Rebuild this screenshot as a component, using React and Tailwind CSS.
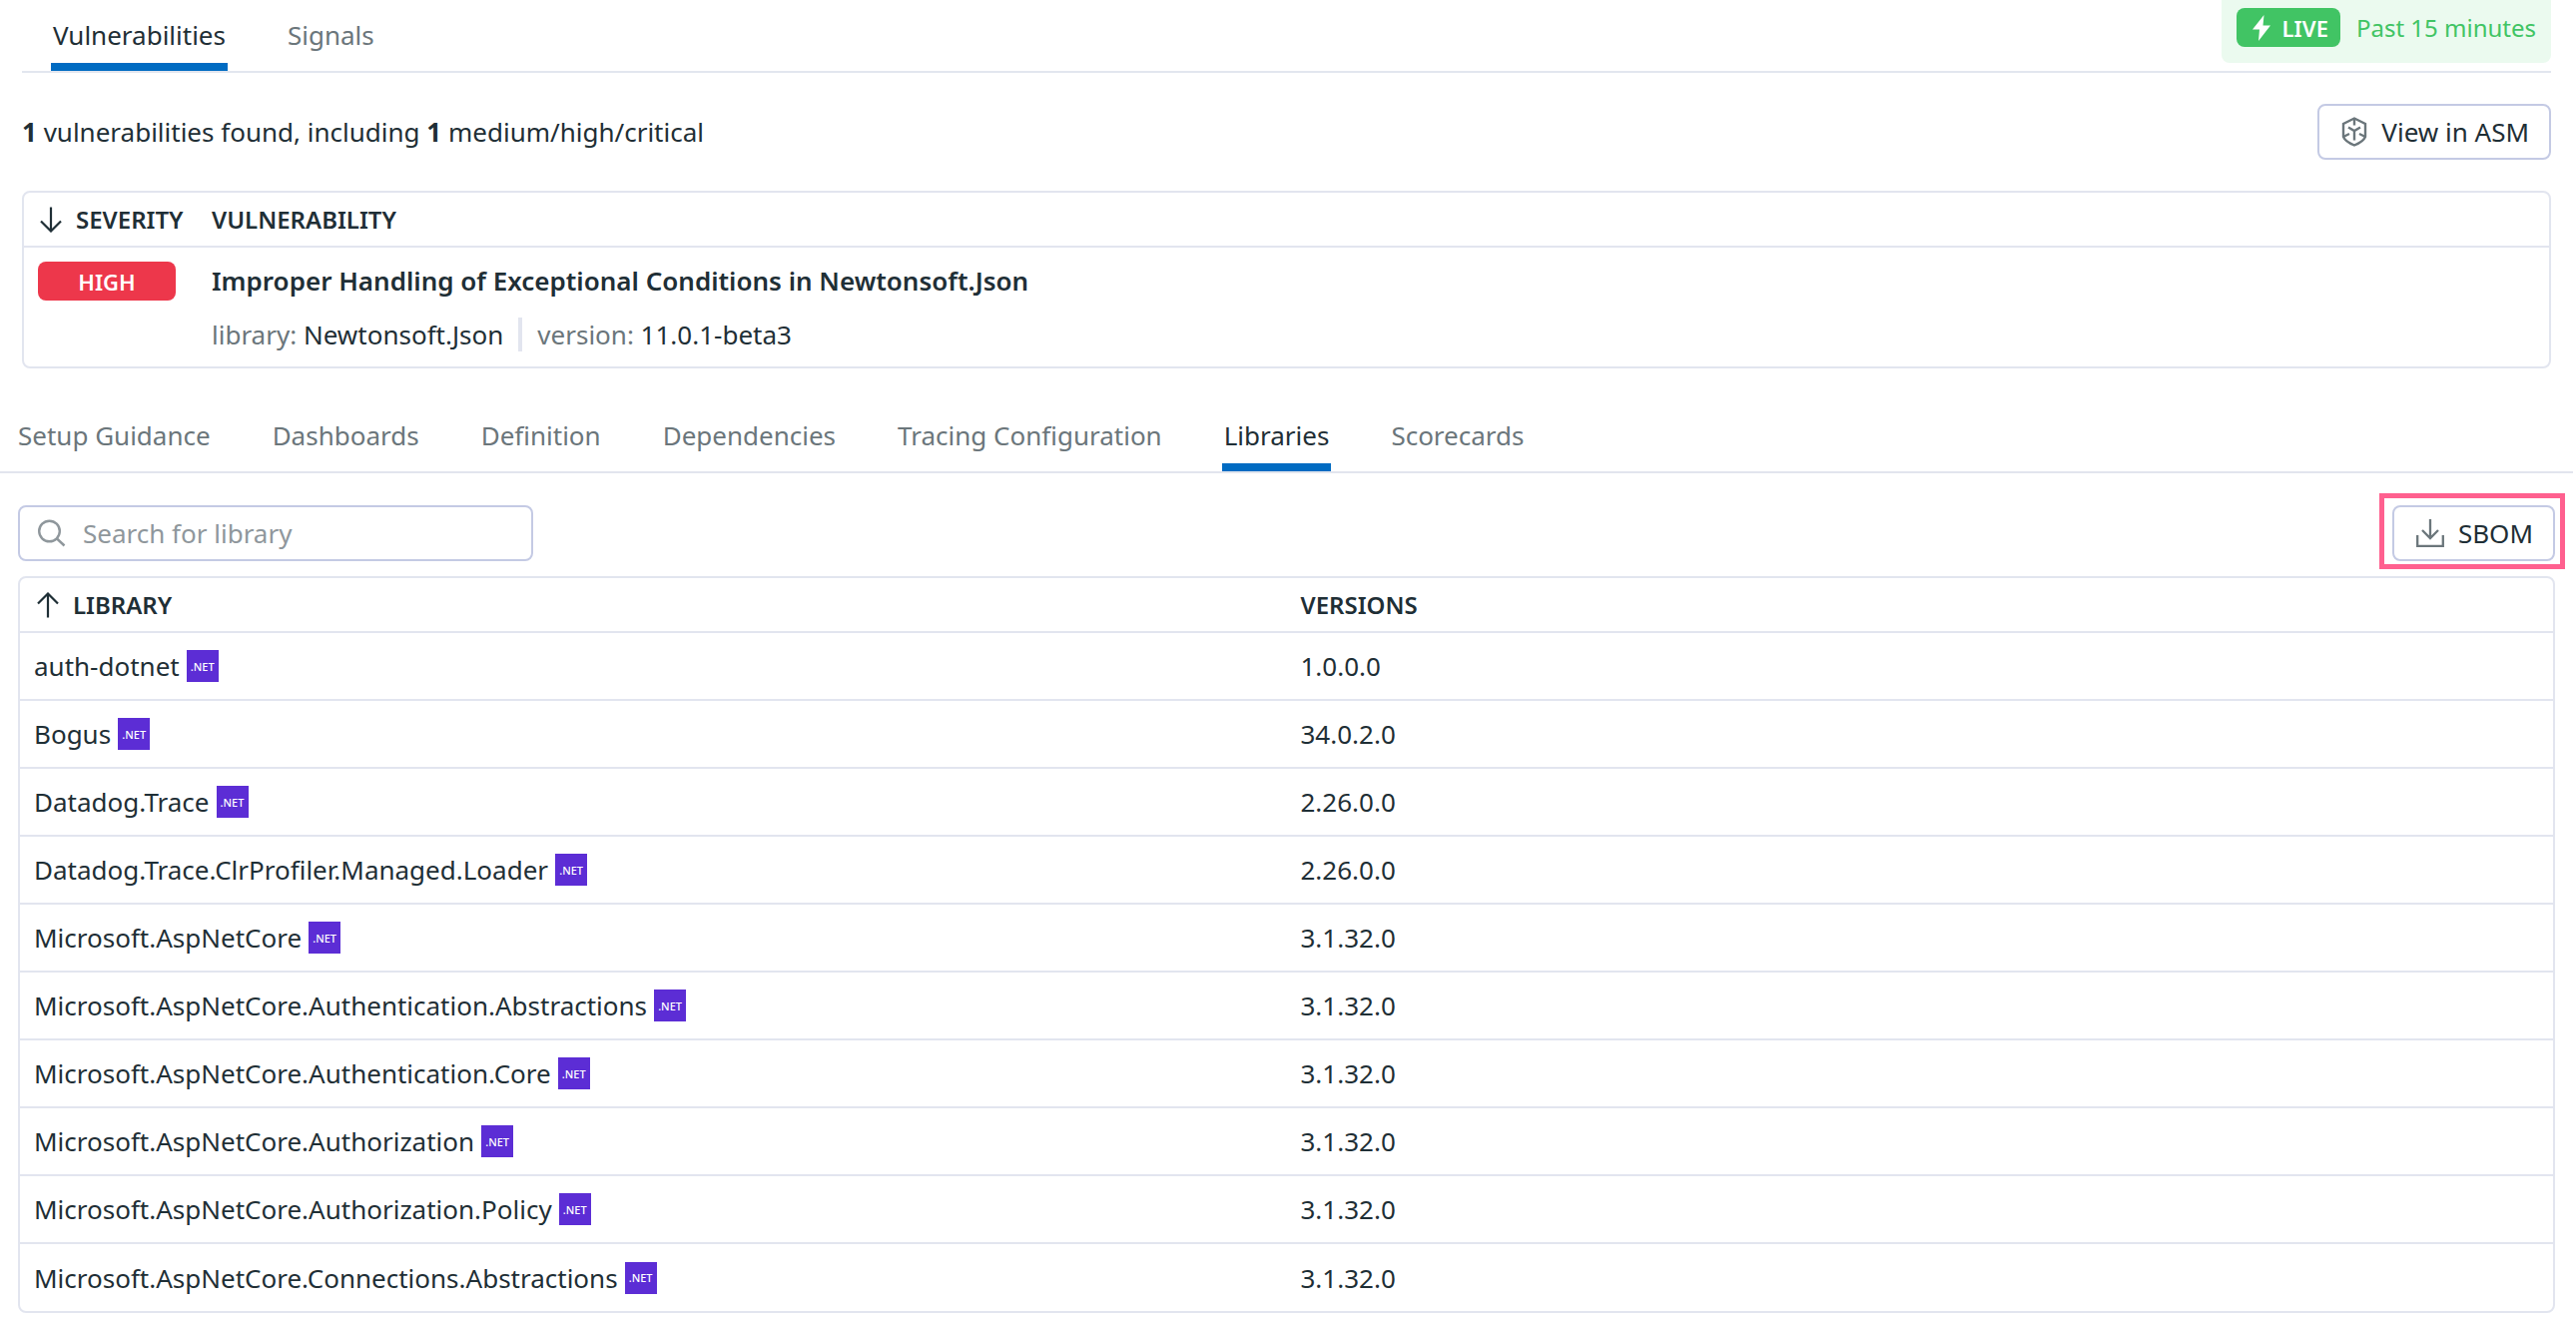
import React from "react";

const detailTabs = [
  "Setup Guidance",
  "Dashboards",
  "Definition",
  "Dependencies",
  "Tracing Configuration",
  "Libraries",
  "Scorecards",
];

const libraries = [
  ["auth-dotnet", "1.0.0.0"],
  ["Bogus", "34.0.2.0"],
  ["Datadog.Trace", "2.26.0.0"],
  ["Datadog.Trace.ClrProfiler.Managed.Loader", "2.26.0.0"],
  ["Microsoft.AspNetCore", "3.1.32.0"],
  ["Microsoft.AspNetCore.Authentication.Abstractions", "3.1.32.0"],
  ["Microsoft.AspNetCore.Authentication.Core", "3.1.32.0"],
  ["Microsoft.AspNetCore.Authorization", "3.1.32.0"],
  ["Microsoft.AspNetCore.Authorization.Policy", "3.1.32.0"],
  ["Microsoft.AspNetCore.Connections.Abstractions", "3.1.32.0"],
];

function SortArrow({ up }) {
  return (
    <svg aria-hidden="true" className="h-[26px] w-[22px] shrink-0" viewBox="0 0 22 26" fill="none" stroke="currentColor" strokeWidth="2.2">
      {up ? <path d="M11 25.5V1.5M1 11.5l10-10 10 10" /> : <path d="M11 0.5v24M1 14.5l10 10 10-10" />}
    </svg>
  );
}

function AsmIcon() {
  return (
    <svg aria-hidden="true" className="h-[30px] w-[26px]" viewBox="0 0 26 30" fill="none" stroke="#6b767b" strokeWidth="2.4">
      <path d="M13 1.5 24 7v13c-1.500 3.500-6 6.500-11 8.500C8 26.500 3.500 23.500 2 20V7Z" />
      <path d="M13 2v6.500M7 10.500l6 3.500 6-3.500M13 14v9.500M2 20l6-3M24 20l-6-3" />
    </svg>
  );
}

function Tab({ label, active }) {
  return (
    <button
      type="button"
      role="tab"
      aria-selected={active}
      className={
        active
          ? "border-b-8 border-[#006bc2] px-0.5 pb-[10px] text-[#1f2f36]"
          : "border-b-8 border-transparent px-0.5 pb-[10px] text-[#6b767b]"
      }
    >
      {label}
    </button>
  );
}

export default function App() {
  return (
    <main className="bg-white font-['Noto_Sans',sans-serif] text-[26px] leading-9 text-[#1f2f36]">
      <section className="pl-[22px] pr-[25px]">
        <div className="flex items-start justify-between border-b-2 border-[#e2e6ef]">
          <div role="tablist" className="flex gap-[58px] pl-[29px] pt-[17px]">
            <Tab label="Vulnerabilities" active />
            <Tab label="Signals" active={false} />
          </div>
          <div className="flex h-[63px] items-start gap-4 rounded-b-lg bg-[#ebfaef] px-[15px] pt-2 text-[#41c464]">
            <span className="flex h-[39px] items-center gap-3 rounded-lg bg-[#41c464] pl-4 pr-3 text-[22px] font-semibold text-white">
              <svg aria-hidden="true" className="h-[26px] w-[18px]" viewBox="0 0 18 26" fill="#fff">
                <path d="M11.500 0 0 14.500h7L6 26 18 10.500h-7.500Z" />
              </svg>
              LIVE
            </span>
            <span className="text-[24px] leading-10">Past 15 minutes</span>
          </div>
        </div>

        <div className="flex items-center justify-between pt-[31px]">
          <p>
            <b className="font-bold">1</b> vulnerabilities found, including <b className="font-bold">1</b> medium/high/critical
          </p>
          <button type="button" className="flex h-14 items-center gap-[14px] rounded-lg border-2 border-[#c4cae4] pl-[22px] pr-5">
            <AsmIcon />
            View in ASM
          </button>
        </div>

        <div className="mt-[31px] rounded-lg border-2 border-[#e2e5ef]">
          <table className="w-full text-left">
            <thead>
              <tr className="border-b-2 border-[#e2e5ef] text-[24px]">
                <th className="h-[54px] w-[174px] py-0 pl-4 font-semibold">
                  <span className="flex items-center gap-[14px]">
                    <SortArrow up={false} />
                    SEVERITY
                  </span>
                </th>
                <th className="py-0 pl-[14px] font-semibold">VULNERABILITY</th>
              </tr>
            </thead>
            <tbody>
              <tr className="align-top">
                <td className="pl-[14px] pt-[14px]">
                  <span className="flex h-[39px] w-[138px] items-center justify-center rounded-lg bg-[#ed374b] text-[22px] font-semibold text-white">HIGH</span>
                </td>
                <td className="pb-[14px] pl-[14px] pt-[15px]">
                  <p className="font-semibold">Improper Handling of Exceptional Conditions in Newtonsoft.Json</p>
                  <p className="flex items-center pt-[18px]">
                    <span><span className="text-[#6b767b]">library:</span> Newtonsoft.Json</span>
                    <span className="mx-[15px] h-[34px] w-1 bg-[#e2e5ef]" />
                    <span><span className="text-[#6b767b]">version:</span> 11.0.1-beta3</span>
                  </p>
                </td>
              </tr>
            </tbody>
          </table>
        </div>
      </section>

      <div role="tablist" className="mr-[3px] mt-[49px] flex gap-[58px] border-b-2 border-[#e2e5ee] pl-4">
        {detailTabs.map((t) => (
          <Tab key={t} label={t} active={t === "Libraries"} />
        ))}
      </div>

      <section className="pl-[18px] pr-[21px] pt-8">
        <div className="flex items-center justify-between">
          <label className="flex h-14 w-[516px] items-center gap-[17px] rounded-lg border-2 border-[#c4cae4] px-[18px]">
            <svg aria-hidden="true" className="h-7 w-7 shrink-0" viewBox="0 0 28 28" fill="none" stroke="#8f979c" strokeWidth="2.4">
              <circle cx="11.500" cy="12" r="10.300" />
              <path d="m18.500 19 8 7.500" />
            </svg>
            <input type="text" aria-label="Search for library" placeholder="Search for library" className="min-w-0 flex-1 bg-transparent outline-none placeholder:text-[#8f979c]" />
          </label>
          <div className="relative">
            <button type="button" className="flex h-14 items-center gap-[14px] rounded-lg border-2 border-[#c4cae4] pl-[22px] pr-5">
              <svg aria-hidden="true" className="h-7 w-7" viewBox="0 0 28 28" fill="none" stroke="#6b767b" strokeWidth="2.3">
                <path d="M14 0v19M6 11l8 8 8-8M1.200 16v10.800h25.600V16" />
              </svg>
              SBOM
            </button>
            <span className="pointer-events-none absolute -bottom-2 -left-[13px] -right-[10px] -top-3 border-5 border-[#ff608f]" />
          </div>
        </div>

        <div className="mt-[15px] rounded-lg border-2 border-[#e2e5ef]">
          <table className="w-full table-fixed text-left">
            <thead>
              <tr className="border-b-2 border-[#e2e5ef] text-[24px]">
                <th className="h-[54px] py-0 pl-[17px] font-semibold">
                  <span className="flex items-center gap-[14px]">
                    <SortArrow up />
                    LIBRARY
                  </span>
                </th>
                <th className="py-0 pl-[14px] font-semibold">VERSIONS</th>
              </tr>
            </thead>
            <tbody>
              {libraries.map(([name, version]) => (
                <tr key={name} className="border-b-2 border-[#e2e5ef] last:border-b-0">
                  <td className="h-[68px] py-0 pl-[14px] last:h-[66px]">
                    <span className="flex items-center gap-[7px]">
                      {name}
                      <span className="flex size-8 items-center justify-center bg-[#5c2dd5] text-[11px] font-medium leading-none text-white">.NET</span>
                    </span>
                  </td>
                  <td className="py-0 pl-[14px]">{version}</td>
                </tr>
              ))}
            </tbody>
          </table>
        </div>
      </section>
    </main>
  );
}
